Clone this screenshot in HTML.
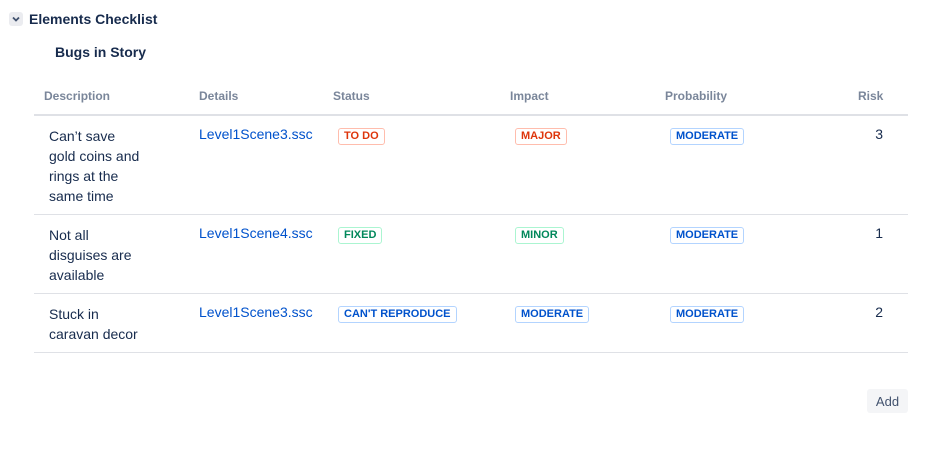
<!DOCTYPE html>
<html><head><style>
body{margin:0;width:931px;height:461px;background:#fff;font-family:"Liberation Sans",sans-serif;color:#172b4d;position:relative;overflow:hidden}
.a{position:absolute;white-space:nowrap}
.h{font-size:12px;font-weight:bold;color:#7a869a;top:89px}
.t{font-size:14px;line-height:20px}
.l{font-size:11px;font-weight:bold;line-height:13px;padding:1px 5px;border:1px solid;border-radius:3px;letter-spacing:0}
.r{border-color:#ffbdad;color:#de350b}
.g{border-color:#abf5d1;color:#00875a}
.b{border-color:#b3d4ff;color:#0052cc}
.lk{color:#0052cc}
.line{position:absolute;left:34px;width:874px;height:1px;background:#dfe1e6}
</style></head><body>
<div class="a" style="left:9px;top:12px;width:14px;height:14px;background:#ebecf0;border-radius:3px"><svg width="14" height="14" viewBox="0 0 14 14"><path d="M4 5.5l3 3 3-3" stroke="#42526e" stroke-width="1.8" fill="none"/></svg></div>
<div class="a" style="left:29px;top:11px;font-size:14px;font-weight:bold">Elements Checklist</div>
<div class="a" style="left:55px;top:44px;font-size:14px;font-weight:bold">Bugs in Story</div>
<div class="a h" style="left:44px">Description</div>
<div class="a h" style="left:199px">Details</div>
<div class="a h" style="left:333px">Status</div>
<div class="a h" style="left:510px">Impact</div>
<div class="a h" style="left:665px">Probability</div>
<div class="a h" style="left:858px">Risk</div>
<div class="line" style="top:114px;height:2px"></div>

<div class="a t" style="left:49px;top:126px">Can’t save<br>gold coins and<br>rings at the<br>same time</div>
<div class="a t lk" style="left:199px;top:124px">Level1Scene3.ssc</div>
<div class="a l r" style="left:338px;top:128px">TO DO</div>
<div class="a l r" style="left:515px;top:128px">MAJOR</div>
<div class="a l b" style="left:670px;top:128px">MODERATE</div>
<div class="a t" style="right:48px;top:124px">3</div>
<div class="line" style="top:214px"></div>

<div class="a t" style="left:49px;top:225px">Not all<br>disguises are<br>available</div>
<div class="a t lk" style="left:199px;top:223px">Level1Scene4.ssc</div>
<div class="a l g" style="left:338px;top:227px">FIXED</div>
<div class="a l g" style="left:515px;top:227px">MINOR</div>
<div class="a l b" style="left:670px;top:227px">MODERATE</div>
<div class="a t" style="right:48px;top:223px">1</div>
<div class="line" style="top:293px"></div>

<div class="a t" style="left:49px;top:304px">Stuck in<br>caravan decor</div>
<div class="a t lk" style="left:199px;top:302px">Level1Scene3.ssc</div>
<div class="a l b" style="left:338px;top:306px">CAN'T REPRODUCE</div>
<div class="a l b" style="left:515px;top:306px">MODERATE</div>
<div class="a l b" style="left:670px;top:306px">MODERATE</div>
<div class="a t" style="right:48px;top:302px">2</div>
<div class="line" style="top:352px"></div>

<div class="a" style="left:867px;top:389px;width:41px;height:24px;background:#f4f5f7;border-radius:3px;font-size:13px;line-height:25px;text-align:center;color:#42526e">Add</div>
</body></html>
